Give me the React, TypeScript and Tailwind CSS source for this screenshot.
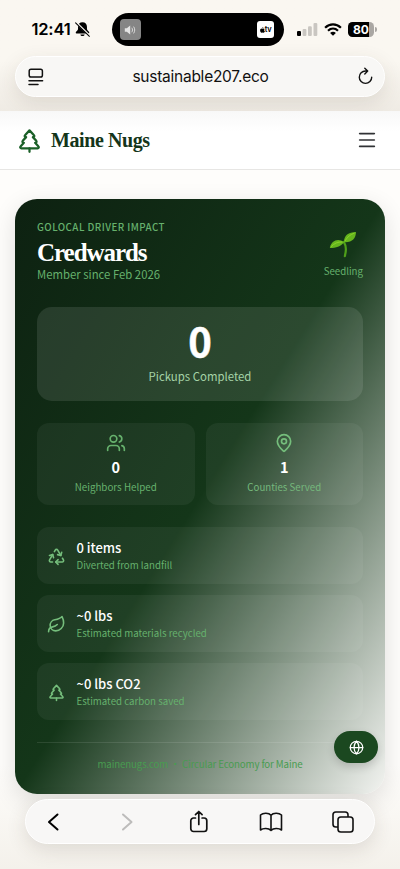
import React from 'react';
import { Menu, Users, MapPin, Recycle, Leaf, TreePine, Globe } from 'lucide-react';

const impactRows = [
  { icon: Recycle, value: '0 items', label: 'Diverted from landfill' },
  { icon: Leaf, value: '~0 lbs', label: 'Estimated materials recycled' },
  { icon: TreePine, value: '~0 lbs CO2', label: 'Estimated carbon saved' },
];

const StatusBar: React.FC = () => (
  <div className="flex h-[56px] pt-[13px] font-['Inter',sans-serif]">
    <div className="flex h-[33px] w-[112px] shrink-0 items-center pl-[31.5px]">
      <span className="w-[42px] text-[16.5px] font-semibold tracking-[-0.2px]">12:41</span>
      <svg width="17" height="17" viewBox="0 0 16 16">
        <path d="M8 1.2c-2.6 0-4.2 1.8-4.2 4.2v2.2c0 1.4-2.2 2.4-2.2 3.5 0 .5.3.7.8.7h11.2c.5 0 .8-.2.8-.7 0-1.1-2.2-2.1-2.2-3.5V5.4c0-2.4-1.6-4.2-4.2-4.2ZM6 12.6c.2 1 .9 1.6 2 1.6s1.8-.6 2-1.6Z" fill="#000" />
        <path d="m1.8 1.2 13 12.6" stroke="#f8f5ef" strokeWidth="1.8" />
        <path d="m1.5 1.8 13 12.6" stroke="#000" strokeWidth="1" strokeLinecap="round" />
      </svg>
    </div>
    <div className="flex h-[33px] w-[172px] shrink-0 items-center justify-between rounded-full bg-black pr-[10px] pl-[8px]">
      <div className="flex h-[21px] w-[21px] items-center justify-center rounded-[4px] bg-[#858585]">
        <svg width="13" height="12" viewBox="0 0 13 12" fill="none">
          <path d="M.8 4.3h2L6.2 1.6v8.8L2.8 7.7h-2Z" fill="#e4e4e4" />
          <path d="M8 4.1c.7 1.1.7 2.7 0 3.8M9.8 2.9c1.3 1.8 1.3 4.4 0 6.2" stroke="#dadada" strokeWidth="1" strokeLinecap="round" />
        </svg>
      </div>
      <div className="flex h-[17px] w-[17px] items-center justify-center rounded-[3px] bg-white">
        <svg width="5" height="6" viewBox="0 0 10 12">
          <path d="M6.6 0C6.7 1.4 5.7 2.5 4.5 2.6 4.4 1.3 5.4.2 6.6 0ZM5 3.4c.6 0 1.2-.6 2.2-.6.9 0 1.7.5 2.2 1.2-1.8 1.1-1.5 3.7.4 4.5-.5 1.4-1.5 3-2.6 3-.8 0-1.1-.5-2.1-.5s-1.3.5-2.1.5C1.7 11.5.2 9 .2 6.6c0-2.3 1.4-3.7 2.9-3.7.8 0 1.4.5 1.9.5Z" />
        </svg>
        <span className="text-[7.5px] leading-none font-semibold tracking-[-0.3px]">tv</span>
      </div>
    </div>
    <div className="flex h-[33px] items-center pl-[13px]">
      <svg width="21" height="13" viewBox="0 0 21 13">
        <rect x="0" y="8" width="4" height="5" rx="1.1" />
        <rect x="5.6" y="6" width="3.8" height="7" rx="1.1" fill="#c9c6c1" />
        <rect x="11" y="3.3" width="3.8" height="9.7" rx="1.1" fill="#c9c6c1" />
        <rect x="16.5" y="0" width="3.8" height="13" rx="1.1" fill="#c9c6c1" />
      </svg>
      <svg className="ml-[6px]" width="18" height="13" viewBox="0 0 18 13" fill="none" stroke="#000" strokeWidth="2.2">
        <path d="M1.1 4.7c4.6-4.5 11.2-4.5 15.8 0M4 7.8c3-2.9 7-2.9 10 0" />
        <path d="M6.1 9.900c1.7-1.5 4.1-1.5 5.800 0L9 12.800Z" fill="#000" stroke="none" />
      </svg>
      <div className="ml-[6px] flex h-[15px] w-[26px] items-center justify-center rounded-[4.5px] bg-[linear-gradient(90deg,#000_80%,#aaa7a3_80%)]">
        <span className="text-[12px] leading-none font-bold text-white">80</span>
      </div>
      <span className="ml-px h-[5px] w-[1.5px] rounded-r-full bg-[#aaa7a3]" />
    </div>
  </div>
);

const AddressBar: React.FC = () => (
  <div className="mx-[15px] flex h-[41px] items-center justify-between rounded-full border border-white bg-[#f8f7f5] pr-[10px] pl-[12px] shadow-[0_6px_20px_rgba(70,60,40,0.12)]">
    <svg width="16" height="18" viewBox="0 0 16 18" fill="none" stroke="#111" strokeWidth="1.5" strokeLinecap="round">
      <rect x="1.2" y="1.2" width="13.2" height="7.8" rx="1.8" />
      <path d="M1 12.7h13.6M1 16.6h9" />
    </svg>
    <span className="font-['Inter',sans-serif] text-[15.5px] tracking-[-0.25px] text-[#111]">sustainable207.eco</span>
    <svg width="17" height="19" viewBox="0 0 17 19" fill="none" stroke="#111" strokeWidth="1.4" strokeLinecap="round" strokeLinejoin="round">
      <path d="M10.5 4h-2a6.2 6.2 0 1 0 6.2 6.2M7.800 1.200l2.900 2.800-2.900 2.900" />
    </svg>
  </div>
);

const Header: React.FC = () => (
  <header className="flex h-[59px] items-center justify-between border-b border-[#e7e6e4] bg-linear-to-b from-[#f8f8f8] to-white to-35% pr-[22px] pl-[16px]">
    <div className="flex items-center">
      <TreePine size={27} strokeWidth={2} color="#1b6028" />
      <span className="ml-[8px] font-['Liberation_Serif',serif] text-[20px] font-bold tracking-[-0.42px] text-[#14351a]">Maine Nugs</span>
    </div>
    <Menu size={22} strokeWidth={1.8} color="#303235" />
  </header>
);

const Seedling: React.FC = () => (
  <svg width="28" height="27" viewBox="0 0 28 27">
    <path d="M14.8 10.800c2.300 3.500 2.800 8.200 1 14.400" fill="none" stroke="#4f9f1a" strokeWidth="2.2" strokeLinecap="round" />
    <path d="M15 11.200C14.800 4.200 19.500 1.300 27 1c-.2 6.500-4 10.800-12 10.200Z" fill="#66b51e" />
    <path d="M15 11.400C9.500 6.800 2.300 9.300.8 17c6.500-.2 10.700-1.800 14.200-5.600Z" fill="#66b51e" />
    <path d="M16 10c2.200-4 5.500-6.500 9.500-8M13.500 11C9 10.700 5 12.300 2 15.800" fill="none" stroke="#94d82c" strokeWidth=".8" />
  </svg>
);

const ImpactCard: React.FC = () => (
  <section className="h-[594.5px] rounded-[22px] bg-[linear-gradient(to_bottom_right,#0d2111_0%,#143619_50%,#f3f4f1_100%)] px-[22px] pt-[21px] font-['Noto_Sans_CJK_SC',sans-serif] shadow-[0_7px_24px_rgba(0,0,0,0.12)]">
    <div className="flex h-[87px] justify-between">
      <div>
        <p className="text-[9.8px] leading-[14px] font-medium tracking-[0.45px] text-[#66b16d]">GOLOCAL DRIVER IMPACT</p>
        <h1 className="font-['Liberation_Serif',serif] text-[25px] leading-[37px] font-bold tracking-[-1.05px] text-white">Credwards</h1>
        <p className="-mt-[4px] text-[11.35px] leading-[14px] text-[#66b16d]">Member since Feb 2026</p>
      </div>
      <div className="flex flex-col items-center pt-[11px]">
        <Seedling />
        <span className="mt-[6px] text-[9.7px] leading-[15px] text-[#66b16d]">Seedling</span>
      </div>
    </div>

    <div className="flex h-[94px] flex-col items-center rounded-[15px] bg-white/10 pt-[13px]">
      <span className="text-[40px] leading-[41px] font-bold text-white [-webkit-text-stroke:0.5px_white]">0</span>
      <span className="mt-[6px] text-[11.4px] leading-[18px] text-[#a5d3a7]">Pickups Completed</span>
    </div>

    <div className="mt-[22px] grid grid-cols-2 gap-[11px]">
      <div className="flex h-[82px] flex-col items-center rounded-[12px] bg-white/5 pt-[10px]">
        <Users size={20} strokeWidth={2} color="#66b16d" />
        <span className="mt-[4px] text-[14.5px] leading-[20px] font-bold text-white">0</span>
        <span className="mt-[3px] text-[9.8px] leading-[15px] text-[#66b16d]">Neighbors Helped</span>
      </div>
      <div className="flex h-[82px] flex-col items-center rounded-[12px] bg-white/5 pt-[10px]">
        <MapPin size={20} strokeWidth={2} color="#75be7c" />
        <span className="mt-[4px] text-[14.5px] leading-[20px] font-bold text-white">1</span>
        <span className="mt-[3px] text-[9.7px] leading-[15px] text-[#75b87c]">Counties Served</span>
      </div>
    </div>

    <div className="mt-[22px] flex flex-col gap-[11px]">
      {impactRows.map(({ icon: Icon, value, label }) => (
        <div key={label} className="flex h-[57px] items-center rounded-[12px] bg-white/5 pt-px pl-[10px]">
          <Icon size={19} strokeWidth={2} color="#75be7c" />
          <div className="ml-[10.5px]">
            <p className="text-[13px] leading-[18px] font-medium text-white">{value}</p>
            <p className="mt-px text-[9.7px] leading-[15px] text-[#66b16d]">{label}</p>
          </div>
        </div>
      ))}
    </div>

    <div className="mt-[22px] border-t border-white/10 pt-[14px] text-center text-[9.7px] leading-[15px] tracking-[-0.12px] text-[#489c50]">
      mainenugs.com • Circular Economy for Maine
    </div>
  </section>
);

const BrowserToolbar: React.FC = () => (
  <div className="absolute top-[799px] right-[25px] left-[25px] flex h-[45px] items-center justify-between rounded-full border border-white bg-[#f8f7f6] pr-[19px] pl-[16px] shadow-[0_6px_20px_rgba(70,60,40,0.14)]">
    <svg width="24" height="24" viewBox="0 0 24 24" fill="none" stroke="#000" strokeWidth="2" strokeLinecap="round" strokeLinejoin="round">
      <path d="m15.500 4.500-8.500 7.500 8.500 7.500" />
    </svg>
    <svg width="24" height="24" viewBox="0 0 24 24" fill="none" stroke="#bdbcbb" strokeWidth="2" strokeLinecap="round" strokeLinejoin="round">
      <path d="m9 4.500 8.500 7.500L9 19.500" />
    </svg>
    <svg width="24" height="24" viewBox="0 0 24 24" fill="none" stroke="#111" strokeWidth="1.7" strokeLinecap="round" strokeLinejoin="round">
      <path d="M8.500 8H6.500a2.700 2.700 0 0 0-2.700 2.700v8.100a2.700 2.700 0 0 0 2.700 2.700h10.600a2.700 2.700 0 0 0 2.700-2.700v-8.100A2.700 2.700 0 0 0 17.100 8h-2M11.800 14.500V1.500M8.500 4.700l3.300-3.200 3.300 3.200" />
    </svg>
    <svg width="24" height="24" viewBox="0 0 24 24" fill="none" stroke="#111" strokeWidth="1.6" strokeLinejoin="round">
      <path d="M12 5.200C9.800 2.700 4.200 2.500 1.500 5v15c2.700-2 8.100-2 10.500.5 2.400-2.500 7.800-2.500 10.500-.5V5C19.800 2.500 14.200 2.700 12 5.200v15" />
    </svg>
    <svg width="24" height="24" viewBox="0 0 24 24" fill="none" stroke="#111" strokeWidth="1.6">
      <path d="M7 17H4.800A2.800 2.800 0 0 1 2 14.200V4.800A2.800 2.800 0 0 1 4.800 2h9.400A2.800 2.800 0 0 1 17 4.800V7" />
      <rect x="7" y="7" width="15" height="15" rx="2.800" />
    </svg>
  </div>
);

const App: React.FC = () => {
  return (
    <div className="relative h-[869px] w-full overflow-hidden bg-[#fefdfb]">
      <div className="h-[111px] bg-linear-to-b from-[#faf7f1] from-55% to-[#efebe4]">
        <StatusBar />
        <AddressBar />
      </div>
      <Header />
      <main className="h-[699px] bg-linear-to-b from-[#fefdfb] from-85% to-[#f4f1eb] px-[15px] pt-[29px]">
        <ImpactCard />
      </main>
      <BrowserToolbar />
      <button className="absolute top-[731px] left-[334px] flex h-[32px] w-[44px] items-center justify-center rounded-full bg-[#1b4820] shadow-[0_4px_8px_rgba(0,0,0,0.16)]">
        <Globe size={15} strokeWidth={2} color="#fff" />
      </button>
    </div>
  );
};

export default App;
